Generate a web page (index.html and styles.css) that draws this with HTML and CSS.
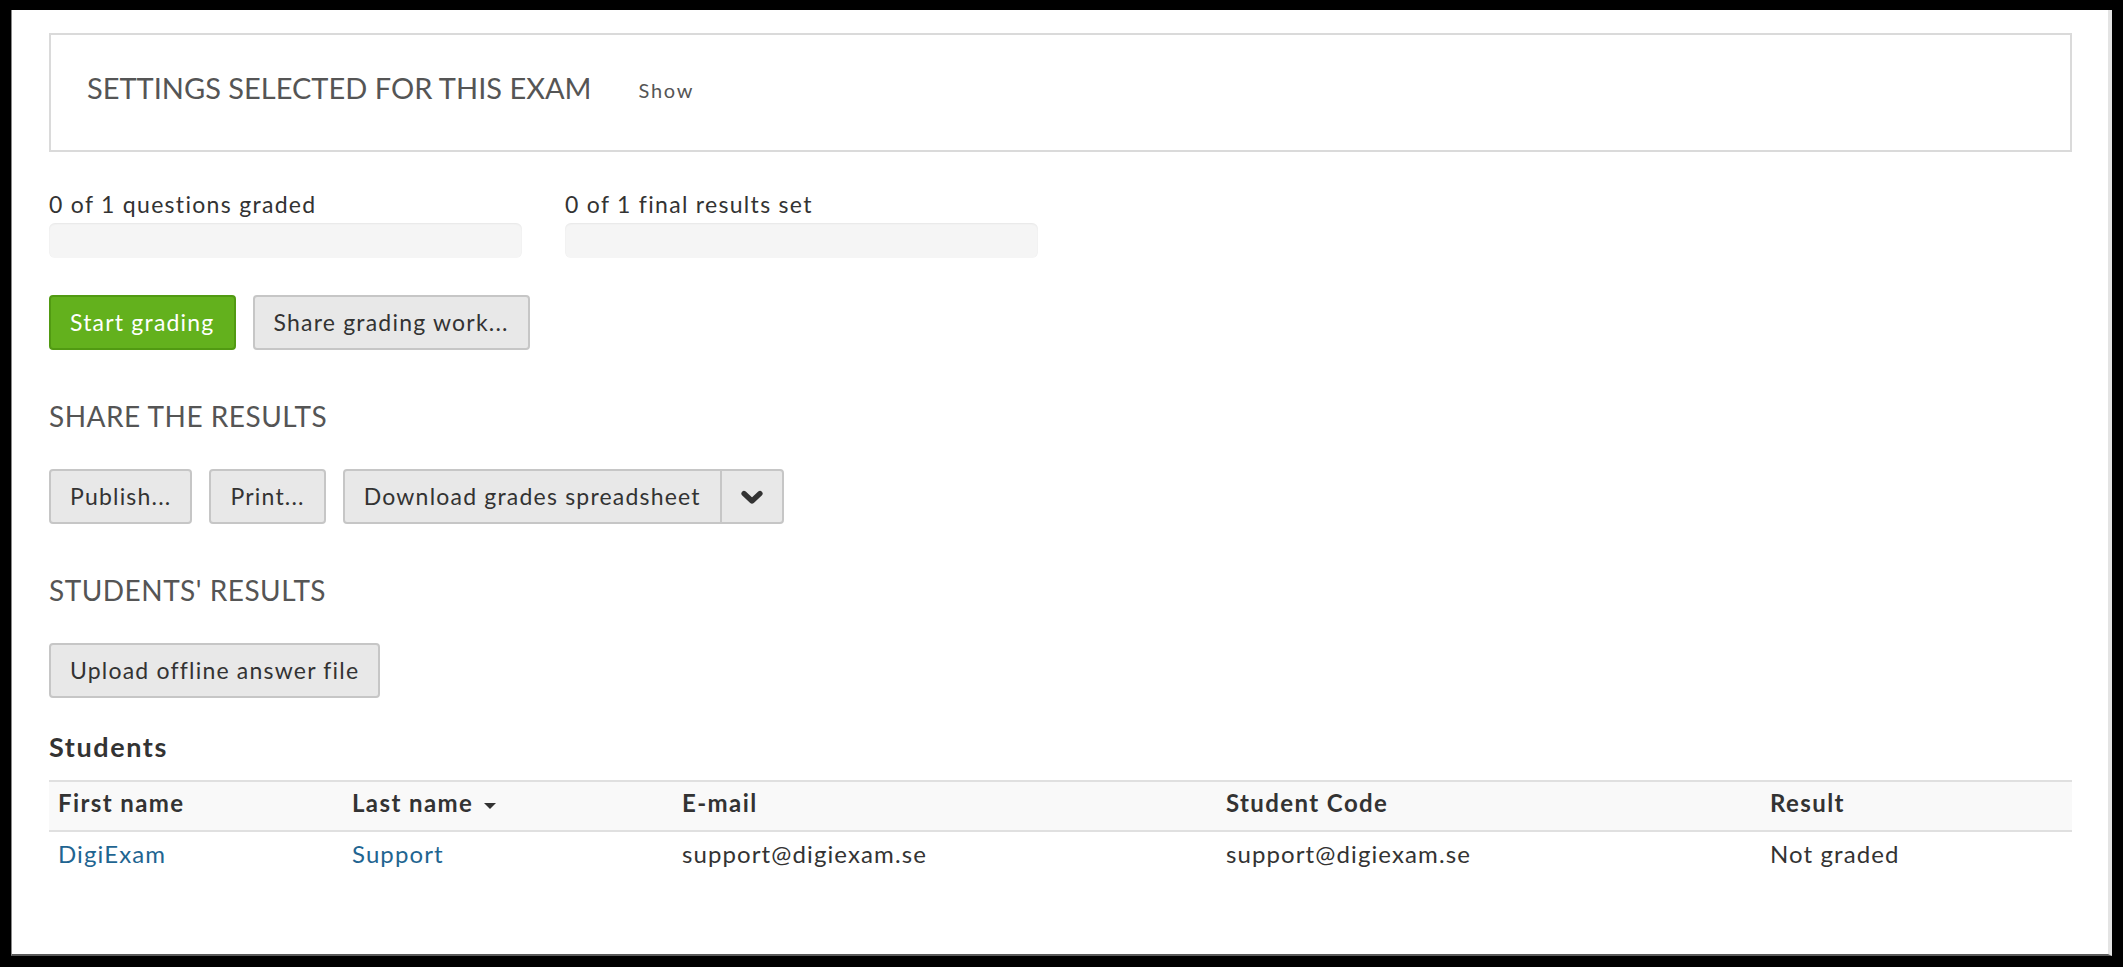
FILE: index.html
```html
<!DOCTYPE html>
<html lang="en">
<head>
<meta charset="utf-8">
<title>Exam results</title>
<link rel="stylesheet" href="styles.css">
</head>
<body>
<div class="window">
  <main class="content">
    <section class="settings">
      <h2 class="settings-title">SETTINGS SELECTED FOR THIS EXAM</h2>
      <a class="settings-show">Show</a>
    </section>

    <section class="progress-row">
      <div class="progress-group">
        <div class="progress-label">0 of 1 questions graded</div>
        <div class="progress-bar"></div>
      </div>
      <div class="progress-group">
        <div class="progress-label">0 of 1 final results set</div>
        <div class="progress-bar"></div>
      </div>
    </section>

    <div class="btn-row btn-row-first">
      <button class="btn btn-success">Start grading</button>
      <button class="btn">Share grading work...</button>
    </div>

    <h3 class="section-title">SHARE THE RESULTS</h3>
    <div class="btn-row">
      <button class="btn">Publish...</button>
      <button class="btn">Print...</button>
      <div class="btn-group">
        <button class="btn btn-main">Download grades spreadsheet</button>
        <button class="btn btn-caret" aria-label="More">
          <svg class="chev" viewBox="0 0 22 15" width="22" height="15"><path d="M3 3.5 L11 11 L19 3.5" fill="none" stroke="#333" stroke-width="5.2" stroke-linecap="round" stroke-linejoin="round"/></svg>
        </button>
      </div>
    </div>

    <h3 class="section-title">STUDENTS' RESULTS</h3>
    <div class="btn-row">
      <button class="btn">Upload offline answer file</button>
    </div>

    <h4 class="students-title">Students</h4>
    <table class="students">
      <colgroup>
        <col class="c1"><col class="c2"><col class="c3"><col class="c4"><col class="c5">
      </colgroup>
      <thead>
        <tr>
          <th>First name</th>
          <th>Last name <span class="sort-caret"></span></th>
          <th>E-mail</th>
          <th>Student Code</th>
          <th>Result</th>
        </tr>
      </thead>
      <tbody>
        <tr>
          <td><a class="link">DigiExam</a></td>
          <td><a class="link">Support</a></td>
          <td>support@digiexam.se</td>
          <td>support@digiexam.se</td>
          <td>Not graded</td>
        </tr>
      </tbody>
    </table>
  </main>
</div>
</body>
</html>
```

FILE: styles.css
```css
html, body {
  margin: 0;
  padding: 0;
  background: #000;
}
body {
  padding: 10px 11px 11px 11px;
  font-family: Lato, "Open Sans", "Liberation Sans", sans-serif;
  color: #333;
}
.window {
  box-sizing: border-box;
  height: 946px;
  background: #fff;
  border-left: 1px solid #8a8a8a;
  border-bottom: 2px solid #5a5a5a;
  border-right: 4px solid #e4e4e4;
  border-top: 0;
  overflow: hidden;
}
.content {
  padding: 23px 36px 0 37px;
}
.settings {
  box-sizing: border-box;
  height: 119px;
  border: 2px solid #dadada;
  display: flex;
  align-items: center;
  padding: 0 36px 9px 36px;
  gap: 47px;
}
.settings-title {
  margin: 0;
  font-size: 29px;
  font-weight: 400;
  color: #555;
  line-height: 36px;
}
.settings-show {
  font-size: 20px;
  letter-spacing: 1.7px;
  color: #555;
  line-height: 26px;
  padding-top: 3px;
}
.progress-row {
  display: flex;
  gap: 43px;
  margin-top: 37px;
}
.progress-group {
  width: 473px;
}
.progress-label {
  font-size: 23px;
  letter-spacing: 1.3px;
  line-height: 30px;
  color: #333;
}
.progress-bar {
  margin-top: 4px;
  height: 35px;
  border-radius: 6px;
  background: #f5f5f5;
  box-shadow: inset 0 1px 2px rgba(0,0,0,0.06);
}
.btn-row {
  display: flex;
  gap: 17px;
  margin-top: 35px;
}
.btn-row-first {
  margin-top: 37px;
}
.btn {
  box-sizing: border-box;
  height: 55px;
  padding: 0 19px;
  font-family: inherit;
  font-size: 23px;
  letter-spacing: 1.2px;
  color: #333;
  background: #e8e8e8;
  border: 2px solid #c6c6c6;
  border-radius: 4px;
  line-height: 1;
  cursor: pointer;
}
.btn-success {
  background: #63b11d;
  border-color: #519a12;
  color: #fff;
}
.btn-group {
  display: flex;
}
.btn-main {
  border-top-right-radius: 0;
  border-bottom-right-radius: 0;
}
.btn-caret {
  width: 64px;
  padding: 0;
  margin-left: -2px;
  border-top-left-radius: 0;
  border-bottom-left-radius: 0;
  display: flex;
  align-items: center;
  justify-content: center;
}
.chev {
  display: block;
  margin-top: 2px;
}
.section-title {
  margin: 48px 0 0 0;
  font-size: 28px;
  font-weight: 400;
  letter-spacing: 0.5px;
  line-height: 36px;
  color: #555;
}
.students-title {
  margin: 32px 0 0 0;
  font-size: 27px;
  font-weight: 700;
  letter-spacing: 1.6px;
  line-height: 34px;
  color: #333;
}
.students {
  width: 100%;
  margin-top: 16px;
  border-collapse: collapse;
  table-layout: fixed;
  font-size: 24px;
}
.c1 { width: 294px; }
.c2 { width: 330px; }
.c3 { width: 544px; }
.c4 { width: 544px; }
.c5 { width: auto; }
.students th {
  text-align: left;
  font-weight: 700;
  letter-spacing: 1.4px;
  background: #f9f9f9;
  border-top: 2px solid #e0e0e0;
  border-bottom: 2px solid #e0e0e0;
  padding: 6px 9px 12px 9px;
  line-height: 30px;
  color: #333;
}
.students td {
  padding: 7px 9px 6px 9px;
  letter-spacing: 1.1px;
  line-height: 30px;
  color: #333;
}
.link {
  color: #1f6591;
  text-decoration: none;
}
.sort-caret {
  display: inline-block;
  width: 0;
  height: 0;
  margin-left: 4px;
  vertical-align: middle;
  border-left: 6px solid transparent;
  border-right: 6px solid transparent;
  border-top: 6px solid #333;
}
```
